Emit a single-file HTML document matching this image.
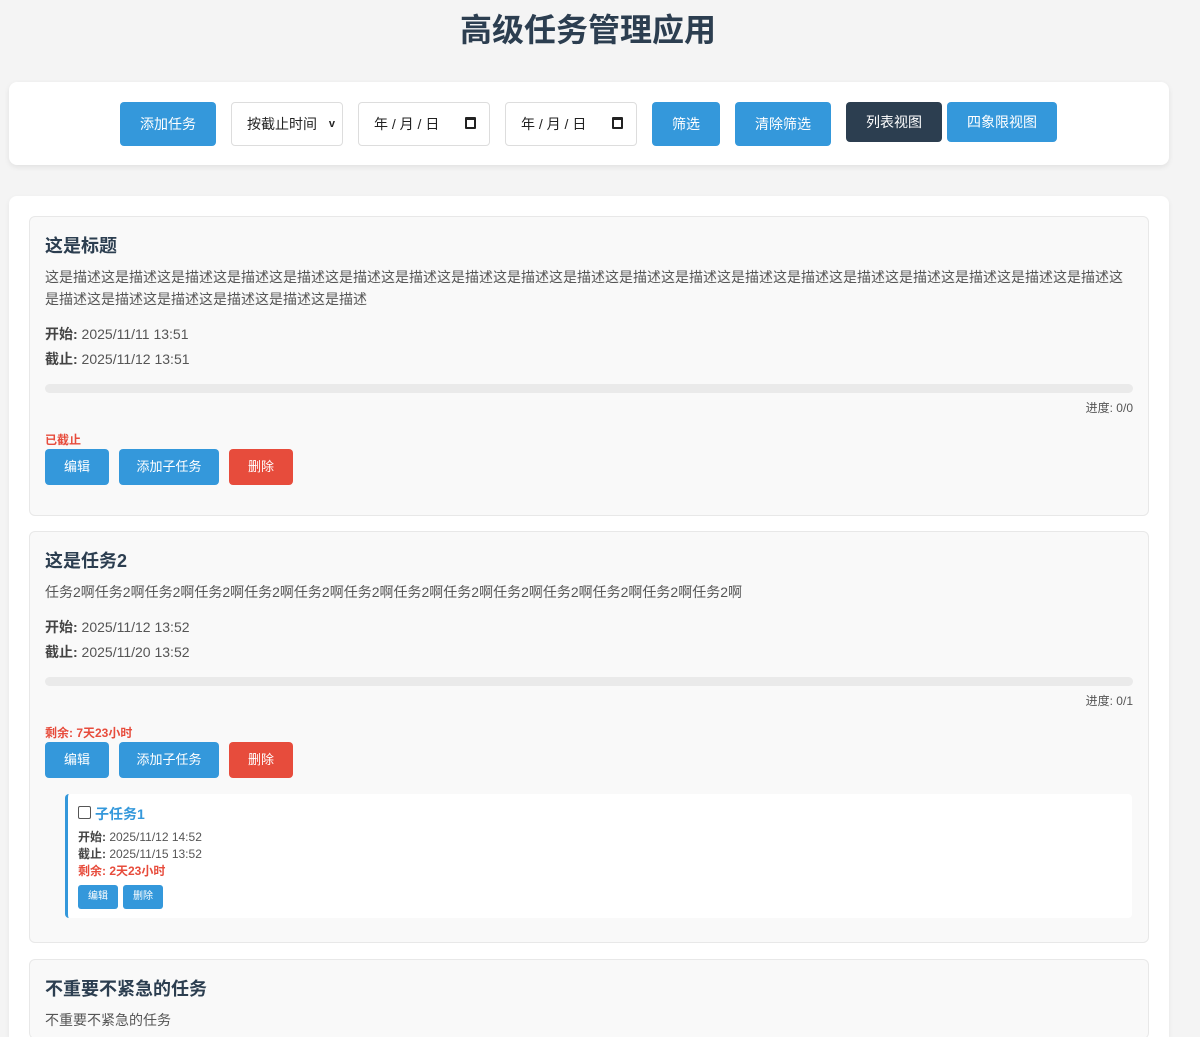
<!DOCTYPE html>
<html><head><meta charset="utf-8"><style>
*{box-sizing:border-box;margin:0;padding:0}
html,body{width:1200px;height:1037px;overflow:hidden}
body{background:#f4f4f4;font-family:"Liberation Sans","Noto Sans CJK SC",sans-serif;color:#333;position:relative}
h1{position:absolute;top:10px;left:0;width:1176px;text-align:center;font-size:32px;font-weight:bold;color:#2c3e50;line-height:40px}
.bar{position:absolute;left:9px;top:82px;width:1160px;height:83px;background:#fff;border-radius:8px;box-shadow:0 2px 6px rgba(0,0,0,.08)}
.b{position:absolute;height:44px;top:20px;border-radius:4px;background:#3498db;color:#fff;font-size:14px;line-height:44px;text-align:center}
.in{position:absolute;height:44px;top:20px;border:1px solid #ddd;border-radius:4px;background:#fff;font-size:14px;line-height:42px;padding-left:15px;color:#222}
.main{position:absolute;left:9px;top:196px;width:1160px;height:841px;background:#fff;border-radius:8px 8px 0 0;box-shadow:0 2px 6px rgba(0,0,0,.06);overflow:hidden}
.card{position:absolute;left:20px;width:1120px;background:#f9f9f9;border:1px solid #e8e8e8;border-radius:6px;padding:0 15px;overflow:hidden}
.t{font-size:18px;font-weight:bold;color:#2c3e50;line-height:24px;margin-top:17px}
.d{font-size:14px;color:#555;line-height:22px;margin-top:8px}
.m{font-size:14px;color:#555;line-height:25px}
.m b{color:#444}
.pg{height:9px;background:#eaeaea;border-radius:5px;margin-top:12px}
.pt{text-align:right;font-size:12px;color:#555;margin-top:7px;line-height:16px}
.r{font-size:12px;font-weight:bold;color:#e74c3c;line-height:16px;margin-top:16px}
.btns{display:flex;gap:10px;margin-top:1px}
.btn{height:36px;line-height:36px;border-radius:4px;color:#fff;font-size:13px;text-align:center;background:#3498db}
.red{background:#e74c3c}
.sub{margin:16px 0 0 20px;width:1067px;background:#fff;border-left:3px solid #3498db;border-radius:4px;padding:11px 10px 9px 10px}
.sub .st{font-size:14px;font-weight:bold;color:#3498db;line-height:18px}
.sub .st i{display:inline-block;width:13px;height:13px;border:1px solid #555;border-radius:2px;vertical-align:0px;margin-right:4px}
.sub .sm{font-size:12px;color:#555;line-height:17px}
.sub .sm b{color:#444}
.sbtn{height:24px;line-height:24px;border-radius:3px;color:#fff;font-size:10px;text-align:center;background:#3498db;width:40px}
</style></head><body>
<h1>高级任务管理应用</h1>
<div class="bar">
<div class="b" style="left:111px;width:96px">添加任务</div>
<div class="in" style="left:222px;width:112px">按截止时间 <span style="position:absolute;right:7px;top:0;font-size:11px;font-weight:bold">v</span></div>
<div class="in" style="left:349px;width:132px">年 / 月 / 日<span style="position:absolute;right:13px;top:14px;width:11px;height:12px;border:2px solid #222;border-top-width:3px;border-radius:1px"></span></div>
<div class="in" style="left:496px;width:132px">年 / 月 / 日<span style="position:absolute;right:13px;top:14px;width:11px;height:12px;border:2px solid #222;border-top-width:3px;border-radius:1px"></span></div>
<div class="b" style="left:643px;width:68px">筛选</div>
<div class="b" style="left:726px;width:96px">清除筛选</div>
<div class="b" style="left:837px;width:96px;height:40px;line-height:40px;background:#2c3e50">列表视图</div>
<div class="b" style="left:938px;width:110px;height:40px;line-height:40px">四象限视图</div>
</div>
<div class="main">
<div class="card" style="top:20px;height:300px">
<div class="t">这是标题</div>
<div class="d">这是描述这是描述这是描述这是描述这是描述这是描述这是描述这是描述这是描述这是描述这是描述这是描述这是描述这是描述这是描述这是描述这是描述这是描述这是描述这是描述这是描述这是描述这是描述这是描述这是描述</div>
<div class="m" style="margin-top:12px"><b>开始:</b> 2025/11/11 13:51</div>
<div class="m"><b>截止:</b> 2025/11/12 13:51</div>
<div class="pg"></div>
<div class="pt">进度: 0/0</div>
<div class="r">已截止</div>
<div class="btns"><div class="btn" style="width:64px">编辑</div><div class="btn" style="width:100px">添加子任务</div><div class="btn red" style="width:64px">删除</div></div>
</div>
<div class="card" style="top:335px;height:412px">
<div class="t">这是任务2</div>
<div class="d">任务2啊任务2啊任务2啊任务2啊任务2啊任务2啊任务2啊任务2啊任务2啊任务2啊任务2啊任务2啊任务2啊任务2啊</div>
<div class="m" style="margin-top:12px"><b>开始:</b> 2025/11/12 13:52</div>
<div class="m"><b>截止:</b> 2025/11/20 13:52</div>
<div class="pg"></div>
<div class="pt">进度: 0/1</div>
<div class="r">剩余: 7天23小时</div>
<div class="btns"><div class="btn" style="width:64px">编辑</div><div class="btn" style="width:100px">添加子任务</div><div class="btn red" style="width:64px">删除</div></div>
<div class="sub">
<div class="st"><i></i>子任务1</div>
<div class="sm" style="margin-top:6px"><b>开始:</b> 2025/11/12 14:52</div>
<div class="sm"><b>截止:</b> 2025/11/15 13:52</div>
<div class="sm" style="color:#e74c3c;font-weight:bold">剩余: 2天23小时</div>
<div style="display:flex;gap:5px;margin-top:5px"><div class="sbtn">编辑</div><div class="sbtn red">删除</div></div>
</div>
</div>
<div class="card" style="top:763px;height:80px">
<div class="t">不重要不紧急的任务</div>
<div class="d">不重要不紧急的任务</div>
</div>
</div>
</body></html>
